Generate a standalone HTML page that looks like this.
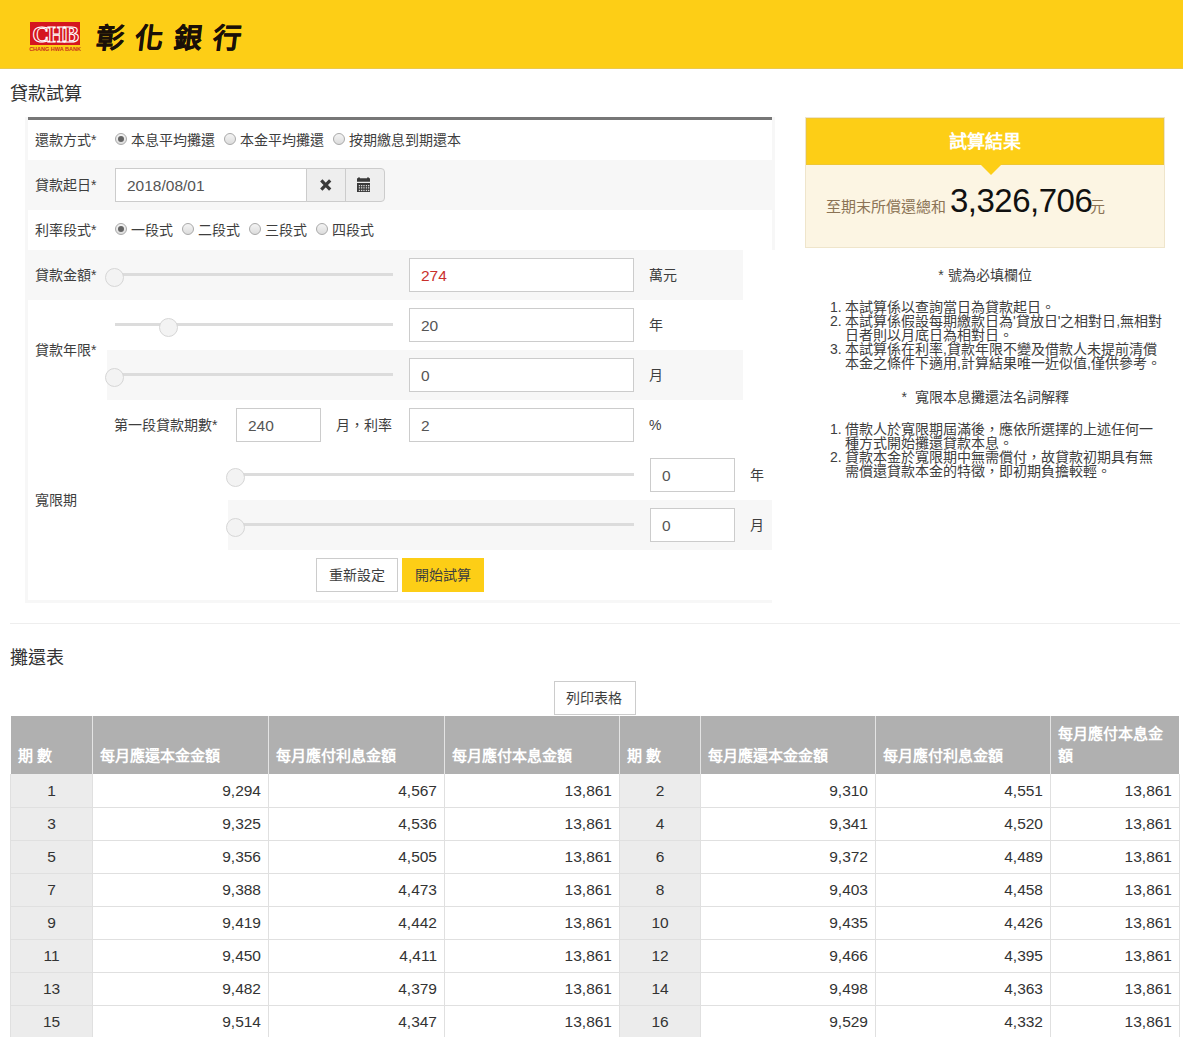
<!DOCTYPE html>
<html lang="zh-TW">
<head>
<meta charset="utf-8">
<style>
*{box-sizing:border-box;margin:0;padding:0}
html,body{width:1183px;height:1037px;overflow:hidden;background:#fff}
body{font-family:"Liberation Sans",sans-serif;color:#333;font-size:14px;position:relative}
.a{position:absolute;white-space:nowrap}
#hdr{left:0;top:0;width:1183px;height:69px;background:#fdce16;border-bottom:1px solid #eac94c}
.chb{left:30px;top:22px;width:50px;height:23px;background:#d5161f}
.chbt{left:30px;top:21px;width:50px;height:26px;text-align:center;font-family:"Liberation Serif",serif;font-size:24px;line-height:26px;color:#d5161f;font-weight:bold;letter-spacing:-1.5px;-webkit-text-stroke:1.1px #fff;transform:scaleX(0.95)}
.chbs{left:29px;top:45px;width:52px;font-size:5.5px;line-height:8px;color:#c8301c;text-align:center;font-weight:bold;letter-spacing:0px}
.logo{left:96px;top:19px;font-size:28px;line-height:40px;font-weight:bold;color:#1a1008;letter-spacing:11px;-webkit-text-stroke:0.3px #1a1008;transform:skewX(-7deg)}
.h1{font-size:18px;line-height:24px;color:#333}
.strip{background:#f7f7f7}
.row{background:#f7f7f7}
.lbl{font-size:14px;line-height:20px;color:#3e3e3e}
.inp{background:#fff;border:1px solid #ccc;height:34px}
.inpt{font-size:15.5px;line-height:20px;color:#555;margin-top:1px}
.track{height:3px;background:#dcdcdc}
.handle{width:19px;height:19px;border-radius:50%;background:#f3f3f3;border:1px solid #d6d6d6}
.radio{width:12px;height:12px;border-radius:50%;border:1px solid #a9a9a9;background:linear-gradient(#f4f4f4,#dcdcdc)}
.radio.on::after{content:"";position:absolute;left:2px;top:2px;width:6px;height:6px;border-radius:50%;background:#636363}
.notes{font-size:14px;line-height:18px;color:#3e3e3e}
.th{font-size:15px;line-height:22px;font-weight:bold;color:#fff}
.td{font-size:15.5px;line-height:21px;color:#333}
</style>
</head>
<body>
<!-- header -->
<div class="a" id="hdr"></div>
<div class="a chb"></div>
<div class="a chbt">CHB</div>
<div class="a chbs">CHANG HWA BANK</div>
<div class="a logo">彰化銀行</div>

<div class="a h1" style="left:10px;top:82px">貸款試算</div>

<!-- form panel -->
<div class="a strip" style="left:25px;top:117px;width:3px;height:486px"></div>
<div class="a strip" style="left:772px;top:117px;width:3px;height:133px"></div>
<div class="a strip" style="left:25px;top:600px;width:747px;height:3px"></div>
<div class="a" style="left:28px;top:117px;width:744px;height:3px;background:#777"></div>

<div class="a row" style="left:28px;top:160px;width:747px;height:50px"></div>
<div class="a row" style="left:28px;top:250px;width:715px;height:50px"></div>
<div class="a row" style="left:107px;top:350px;width:636px;height:50px"></div>
<div class="a row" style="left:228px;top:500px;width:544px;height:50px"></div>

<!-- row1 -->
<div class="a lbl" style="left:35px;top:130px">還款方式*</div>
<div class="a radio on" style="left:115px;top:133px"></div>
<div class="a lbl" style="left:131px;top:130px">本息平均攤還</div>
<div class="a radio" style="left:224px;top:133px"></div>
<div class="a lbl" style="left:240px;top:130px">本金平均攤還</div>
<div class="a radio" style="left:333px;top:133px"></div>
<div class="a lbl" style="left:349px;top:130px">按期繳息到期還本</div>

<!-- row2 -->
<div class="a lbl" style="left:35px;top:175px">貸款起日*</div>
<div class="a inp" style="left:115px;top:168px;width:192px"></div>
<div class="a inpt" style="left:127px;top:175px">2018/08/01</div>
<div class="a" style="left:306px;top:168px;width:79px;height:34px;background:#eee;border:1px solid #ccc;border-radius:0 4px 4px 0"></div>
<div class="a" style="left:345px;top:168px;width:1px;height:34px;background:#ccc"></div>

<svg class="a" style="left:319px;top:178px" width="13" height="14" viewBox="0 0 13 14"><path d="M2.3 2.4 L11.2 11.6 M11.2 2.4 L2.3 11.6" stroke="#3a3a3a" stroke-width="3.2"/></svg>
<svg class="a" style="left:357px;top:177px" width="13" height="15" viewBox="0 0 13 15"><path d="M0 1.2 h1 v-0.7 h2 v0.7 h7 v-0.7 h2 v0.7 h1 v3.6 h-13z" fill="#3a3a3a"/><rect x="0" y="6" width="13" height="9" fill="#3a3a3a"/><g fill="#d8d8d8"><rect x="1.8" y="8.0" width="1.3" height="1.3"/><rect x="4.0" y="8.0" width="1.3" height="1.3"/><rect x="6.3" y="8.0" width="1.3" height="1.3"/><rect x="8.8" y="8.0" width="1.3" height="1.3"/><rect x="11.0" y="8.0" width="1.3" height="1.3"/><rect x="1.8" y="10.2" width="1.3" height="1.3"/><rect x="4.0" y="10.2" width="1.3" height="1.3"/><rect x="6.3" y="10.2" width="1.3" height="1.3"/><rect x="8.8" y="10.2" width="1.3" height="1.3"/><rect x="11.0" y="10.2" width="1.3" height="1.3"/><rect x="1.8" y="12.8" width="1.3" height="1.3"/><rect x="4.0" y="12.8" width="1.3" height="1.3"/><rect x="6.3" y="12.8" width="1.3" height="1.3"/><rect x="8.8" y="12.8" width="1.3" height="1.3"/><rect x="11.0" y="12.8" width="1.3" height="1.3"/></g></svg>

<!-- row3 -->
<div class="a lbl" style="left:35px;top:220px">利率段式*</div>
<div class="a radio on" style="left:115px;top:223px"></div>
<div class="a lbl" style="left:131px;top:220px">一段式</div>
<div class="a radio" style="left:182px;top:223px"></div>
<div class="a lbl" style="left:198px;top:220px">二段式</div>
<div class="a radio" style="left:249px;top:223px"></div>
<div class="a lbl" style="left:265px;top:220px">三段式</div>
<div class="a radio" style="left:316px;top:223px"></div>
<div class="a lbl" style="left:332px;top:220px">四段式</div>

<!-- row4 amount -->
<div class="a lbl" style="left:35px;top:265px">貸款金額*</div>
<div class="a track" style="left:115px;top:273px;width:278px"></div>
<div class="a handle" style="left:105px;top:268px"></div>
<div class="a inp" style="left:409px;top:258px;width:225px"></div>
<div class="a inpt" style="left:421px;top:265px;color:#c9302c">274</div>
<div class="a lbl" style="left:649px;top:265px">萬元</div>

<!-- row5/6 years -->
<div class="a lbl" style="left:35px;top:340px">貸款年限*</div>
<div class="a track" style="left:115px;top:323px;width:278px"></div>
<div class="a handle" style="left:159px;top:318px"></div>
<div class="a inp" style="left:409px;top:308px;width:225px"></div>
<div class="a inpt" style="left:421px;top:315px">20</div>
<div class="a lbl" style="left:649px;top:315px">年</div>

<div class="a track" style="left:115px;top:373px;width:278px"></div>
<div class="a handle" style="left:105px;top:368px"></div>
<div class="a inp" style="left:409px;top:358px;width:225px"></div>
<div class="a inpt" style="left:421px;top:365px">0</div>
<div class="a lbl" style="left:649px;top:365px">月</div>

<!-- row7 -->
<div class="a lbl" style="left:114px;top:415px">第一段貸款期數*</div>
<div class="a inp" style="left:236px;top:408px;width:85px"></div>
<div class="a inpt" style="left:248px;top:415px">240</div>
<div class="a lbl" style="left:336px;top:415px">月，利率</div>
<div class="a inp" style="left:409px;top:408px;width:225px"></div>
<div class="a inpt" style="left:421px;top:415px">2</div>
<div class="a lbl" style="left:649px;top:415px">%</div>

<!-- grace -->
<div class="a lbl" style="left:35px;top:490px">寬限期</div>
<div class="a track" style="left:235px;top:473px;width:399px"></div>
<div class="a handle" style="left:226px;top:468px"></div>
<div class="a inp" style="left:650px;top:458px;width:85px"></div>
<div class="a inpt" style="left:662px;top:465px">0</div>
<div class="a lbl" style="left:750px;top:465px">年</div>

<div class="a track" style="left:235px;top:523px;width:399px"></div>
<div class="a handle" style="left:226px;top:518px"></div>
<div class="a inp" style="left:650px;top:508px;width:85px"></div>
<div class="a inpt" style="left:662px;top:515px">0</div>
<div class="a lbl" style="left:750px;top:515px">月</div>

<!-- buttons -->
<div class="a" style="left:316px;top:558px;width:82px;height:34px;border:1px solid #ccc;background:#fff"></div>
<div class="a lbl" style="left:329px;top:565px">重新設定</div>
<div class="a" style="left:402px;top:558px;width:82px;height:34px;background:#fdce16"></div>
<div class="a lbl" style="left:415px;top:565px">開始試算</div>

<!-- RIGHT PANEL -->
<div class="a" style="left:805px;top:117px;width:360px;height:131px;background:#fcf5e3;border:1px solid #efe5cb"></div>
<div class="a" style="left:806px;top:118px;width:358px;height:47px;background:#fdce16;border:1px solid #efc733"></div>
<div class="a" style="left:980px;top:164px;width:0;height:0;border-left:11px solid transparent;border-right:11px solid transparent;border-top:11px solid #fdce16"></div>
<div class="a" style="left:805px;top:129px;width:360px;text-align:center;font-size:18px;line-height:26px;font-weight:bold;color:#fff">試算結果</div>
<div class="a" style="left:826px;top:197px;font-size:15px;line-height:20px;color:#8b7355">至期末所償還總和</div>
<div class="a" style="left:950px;top:181px;font-size:33px;line-height:40px;color:#111;letter-spacing:-0.5px">3,326,706</div>
<div class="a" style="left:1090px;top:197px;font-size:15px;line-height:20px;color:#8b7355">元</div>

<div class="a notes" style="left:805px;top:266px;width:360px;text-align:center">* 號為必填欄位</div>
<div class="a notes" style="left:830px;top:298px">1.</div>
<div class="a notes" style="left:845px;top:298px">本試算係以查詢當日為貸款起日。</div>
<div class="a notes" style="left:830px;top:312px">2.</div>
<div class="a notes" style="left:845px;top:312px">本試算係假設每期繳款日為'貸放日'之相對日,無相對</div>
<div class="a notes" style="left:845px;top:326px">日者則以月底日為相對日。</div>
<div class="a notes" style="left:830px;top:340px">3.</div>
<div class="a notes" style="left:845px;top:340px">本試算係在利率,貸款年限不變及借款人未提前清償</div>
<div class="a notes" style="left:845px;top:354px">本金之條件下適用,計算結果唯一近似值,僅供參考。</div>
<div class="a notes" style="left:805px;top:388px;width:360px;text-align:center">*&nbsp; 寬限本息攤還法名詞解釋</div>
<div class="a notes" style="left:830px;top:420px">1.</div>
<div class="a notes" style="left:845px;top:420px">借款人於寬限期屆滿後，應依所選擇的上述任何一</div>
<div class="a notes" style="left:845px;top:434px">種方式開始攤還貸款本息。</div>
<div class="a notes" style="left:830px;top:448px">2.</div>
<div class="a notes" style="left:845px;top:448px">貸款本金於寬限期中無需償付，故貸款初期具有無</div>
<div class="a notes" style="left:845px;top:462px">需償還貸款本金的特徵，即初期負擔較輕。</div>

<!-- separator -->
<div class="a" style="left:10px;top:623px;width:1170px;height:1px;background:#eee"></div>
<div class="a h1" style="left:10px;top:646px">攤還表</div>

<!-- TABLE -->
<div class="a" style="left:554px;top:681px;width:82px;height:34px;border:1px solid #ccc;background:#fff"></div>
<div class="a lbl" style="left:566px;top:688px">列印表格</div>
<div class="a" style="left:11px;top:716px;width:1168px;height:58px;background:#b0b0b0"></div>
<div class="a" style="left:92px;top:716px;width:1px;height:58px;background:#e4e4e4"></div>
<div class="a" style="left:268px;top:716px;width:1px;height:58px;background:#e4e4e4"></div>
<div class="a" style="left:444px;top:716px;width:1px;height:58px;background:#e4e4e4"></div>
<div class="a" style="left:619px;top:716px;width:1px;height:58px;background:#e4e4e4"></div>
<div class="a" style="left:700px;top:716px;width:1px;height:58px;background:#e4e4e4"></div>
<div class="a" style="left:875px;top:716px;width:1px;height:58px;background:#e4e4e4"></div>
<div class="a" style="left:1050px;top:716px;width:1px;height:58px;background:#e4e4e4"></div>
<div class="a th" style="left:18px;top:745px">期 數</div>
<div class="a th" style="left:100px;top:745px">每月應還本金金額</div>
<div class="a th" style="left:276px;top:745px">每月應付利息金額</div>
<div class="a th" style="left:452px;top:745px">每月應付本息金額</div>
<div class="a th" style="left:627px;top:745px">期 數</div>
<div class="a th" style="left:708px;top:745px">每月應還本金金額</div>
<div class="a th" style="left:883px;top:745px">每月應付利息金額</div>
<div class="a th" style="left:1058px;top:723px;line-height:22px">每月應付本息金<br>額</div>
<div class="a" style="left:11px;top:774px;width:81px;height:263px;background:#ececec"></div>
<div class="a" style="left:620px;top:774px;width:80px;height:263px;background:#ececec"></div>
<div class="a" style="left:92px;top:774px;width:1px;height:263px;background:#e0e0e0"></div>
<div class="a" style="left:268px;top:774px;width:1px;height:263px;background:#e0e0e0"></div>
<div class="a" style="left:444px;top:774px;width:1px;height:263px;background:#e0e0e0"></div>
<div class="a" style="left:619px;top:774px;width:1px;height:263px;background:#e0e0e0"></div>
<div class="a" style="left:700px;top:774px;width:1px;height:263px;background:#e0e0e0"></div>
<div class="a" style="left:875px;top:774px;width:1px;height:263px;background:#e0e0e0"></div>
<div class="a" style="left:1050px;top:774px;width:1px;height:263px;background:#e0e0e0"></div>
<div class="a" style="left:10px;top:774px;width:1px;height:263px;background:#e0e0e0"></div>
<div class="a" style="left:1179px;top:774px;width:1px;height:263px;background:#e0e0e0"></div>
<div class="a td" style="left:11px;top:780px;width:81px;text-align:center">1</div>
<div class="a td" style="left:93px;top:780px;width:168px;text-align:right">9,294</div>
<div class="a td" style="left:269px;top:780px;width:168px;text-align:right">4,567</div>
<div class="a td" style="left:445px;top:780px;width:167px;text-align:right">13,861</div>
<div class="a td" style="left:620px;top:780px;width:80px;text-align:center">2</div>
<div class="a td" style="left:701px;top:780px;width:167px;text-align:right">9,310</div>
<div class="a td" style="left:876px;top:780px;width:167px;text-align:right">4,551</div>
<div class="a td" style="left:1051px;top:780px;width:121px;text-align:right">13,861</div>
<div class="a" style="left:10px;top:807px;width:1170px;height:1px;background:#e0e0e0"></div>
<div class="a td" style="left:11px;top:813px;width:81px;text-align:center">3</div>
<div class="a td" style="left:93px;top:813px;width:168px;text-align:right">9,325</div>
<div class="a td" style="left:269px;top:813px;width:168px;text-align:right">4,536</div>
<div class="a td" style="left:445px;top:813px;width:167px;text-align:right">13,861</div>
<div class="a td" style="left:620px;top:813px;width:80px;text-align:center">4</div>
<div class="a td" style="left:701px;top:813px;width:167px;text-align:right">9,341</div>
<div class="a td" style="left:876px;top:813px;width:167px;text-align:right">4,520</div>
<div class="a td" style="left:1051px;top:813px;width:121px;text-align:right">13,861</div>
<div class="a" style="left:10px;top:840px;width:1170px;height:1px;background:#e0e0e0"></div>
<div class="a td" style="left:11px;top:846px;width:81px;text-align:center">5</div>
<div class="a td" style="left:93px;top:846px;width:168px;text-align:right">9,356</div>
<div class="a td" style="left:269px;top:846px;width:168px;text-align:right">4,505</div>
<div class="a td" style="left:445px;top:846px;width:167px;text-align:right">13,861</div>
<div class="a td" style="left:620px;top:846px;width:80px;text-align:center">6</div>
<div class="a td" style="left:701px;top:846px;width:167px;text-align:right">9,372</div>
<div class="a td" style="left:876px;top:846px;width:167px;text-align:right">4,489</div>
<div class="a td" style="left:1051px;top:846px;width:121px;text-align:right">13,861</div>
<div class="a" style="left:10px;top:873px;width:1170px;height:1px;background:#e0e0e0"></div>
<div class="a td" style="left:11px;top:879px;width:81px;text-align:center">7</div>
<div class="a td" style="left:93px;top:879px;width:168px;text-align:right">9,388</div>
<div class="a td" style="left:269px;top:879px;width:168px;text-align:right">4,473</div>
<div class="a td" style="left:445px;top:879px;width:167px;text-align:right">13,861</div>
<div class="a td" style="left:620px;top:879px;width:80px;text-align:center">8</div>
<div class="a td" style="left:701px;top:879px;width:167px;text-align:right">9,403</div>
<div class="a td" style="left:876px;top:879px;width:167px;text-align:right">4,458</div>
<div class="a td" style="left:1051px;top:879px;width:121px;text-align:right">13,861</div>
<div class="a" style="left:10px;top:906px;width:1170px;height:1px;background:#e0e0e0"></div>
<div class="a td" style="left:11px;top:912px;width:81px;text-align:center">9</div>
<div class="a td" style="left:93px;top:912px;width:168px;text-align:right">9,419</div>
<div class="a td" style="left:269px;top:912px;width:168px;text-align:right">4,442</div>
<div class="a td" style="left:445px;top:912px;width:167px;text-align:right">13,861</div>
<div class="a td" style="left:620px;top:912px;width:80px;text-align:center">10</div>
<div class="a td" style="left:701px;top:912px;width:167px;text-align:right">9,435</div>
<div class="a td" style="left:876px;top:912px;width:167px;text-align:right">4,426</div>
<div class="a td" style="left:1051px;top:912px;width:121px;text-align:right">13,861</div>
<div class="a" style="left:10px;top:939px;width:1170px;height:1px;background:#e0e0e0"></div>
<div class="a td" style="left:11px;top:945px;width:81px;text-align:center">11</div>
<div class="a td" style="left:93px;top:945px;width:168px;text-align:right">9,450</div>
<div class="a td" style="left:269px;top:945px;width:168px;text-align:right">4,411</div>
<div class="a td" style="left:445px;top:945px;width:167px;text-align:right">13,861</div>
<div class="a td" style="left:620px;top:945px;width:80px;text-align:center">12</div>
<div class="a td" style="left:701px;top:945px;width:167px;text-align:right">9,466</div>
<div class="a td" style="left:876px;top:945px;width:167px;text-align:right">4,395</div>
<div class="a td" style="left:1051px;top:945px;width:121px;text-align:right">13,861</div>
<div class="a" style="left:10px;top:972px;width:1170px;height:1px;background:#e0e0e0"></div>
<div class="a td" style="left:11px;top:978px;width:81px;text-align:center">13</div>
<div class="a td" style="left:93px;top:978px;width:168px;text-align:right">9,482</div>
<div class="a td" style="left:269px;top:978px;width:168px;text-align:right">4,379</div>
<div class="a td" style="left:445px;top:978px;width:167px;text-align:right">13,861</div>
<div class="a td" style="left:620px;top:978px;width:80px;text-align:center">14</div>
<div class="a td" style="left:701px;top:978px;width:167px;text-align:right">9,498</div>
<div class="a td" style="left:876px;top:978px;width:167px;text-align:right">4,363</div>
<div class="a td" style="left:1051px;top:978px;width:121px;text-align:right">13,861</div>
<div class="a" style="left:10px;top:1005px;width:1170px;height:1px;background:#e0e0e0"></div>
<div class="a td" style="left:11px;top:1011px;width:81px;text-align:center">15</div>
<div class="a td" style="left:93px;top:1011px;width:168px;text-align:right">9,514</div>
<div class="a td" style="left:269px;top:1011px;width:168px;text-align:right">4,347</div>
<div class="a td" style="left:445px;top:1011px;width:167px;text-align:right">13,861</div>
<div class="a td" style="left:620px;top:1011px;width:80px;text-align:center">16</div>
<div class="a td" style="left:701px;top:1011px;width:167px;text-align:right">9,529</div>
<div class="a td" style="left:876px;top:1011px;width:167px;text-align:right">4,332</div>
<div class="a td" style="left:1051px;top:1011px;width:121px;text-align:right">13,861</div>
<!-- /TABLE -->
</body>
</html>
